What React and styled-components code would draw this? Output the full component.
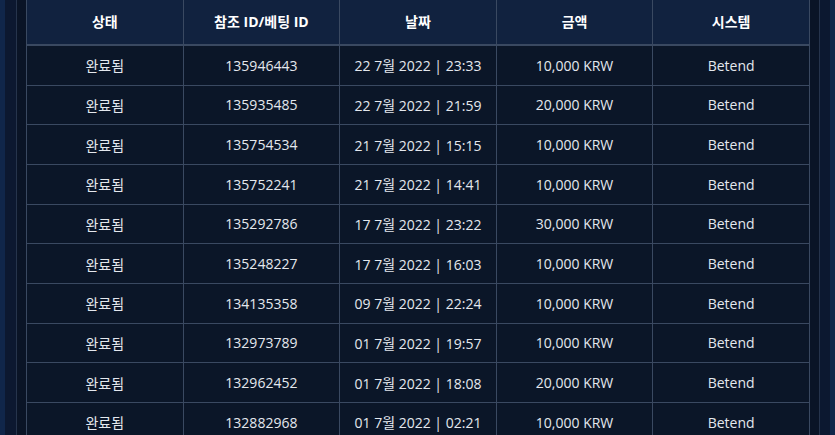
import React from 'react';
import styled, { createGlobalStyle } from 'styled-components';

const GlobalStyle = createGlobalStyle`
  html, body {
    margin: 0;
    padding: 0;
    height: 100%;
    overflow: hidden;
    background: #10264a;
  }
  body {
    font-family: "Open Sans", "Noto Sans", "Noto Sans CJK KR", sans-serif;
  }
`;

const rows = [
  ['135946443', '22 7월 2022 | 23:33', '10,000 KRW'],
  ['135935485', '22 7월 2022 | 21:59', '20,000 KRW'],
  ['135754534', '21 7월 2022 | 15:15', '10,000 KRW'],
  ['135752241', '21 7월 2022 | 14:41', '10,000 KRW'],
  ['135292786', '17 7월 2022 | 23:22', '30,000 KRW'],
  ['135248227', '17 7월 2022 | 16:03', '10,000 KRW'],
  ['134135358', '09 7월 2022 | 22:24', '10,000 KRW'],
  ['132973789', '01 7월 2022 | 19:57', '10,000 KRW'],
  ['132962452', '01 7월 2022 | 18:08', '20,000 KRW'],
  ['132882968', '01 7월 2022 | 02:21', '10,000 KRW'],
];

const Page = styled.div`
  padding: 0 5px;
  height: 100vh;
  box-sizing: border-box;
`;

const Outer = styled.div`
  background: #0c1830;
  padding: 0 10px 0 11px;
  height: 100%;
`;

const Inner = styled.div`
  background: #0a1426;
  border-left: 1px solid #26344c;
  border-right: 1px solid #26344c;
  padding: 0 9px;
  height: 100%;
`;

const Table = styled.table`
  width: 784px;
  border-collapse: collapse;
  table-layout: fixed;
  border: 1px solid #3a4961;
  border-top: none;
`;

const Th = styled.th`
  height: 41px;
  padding: 0 0 3px;
  background: #11223f;
  color: #ffffff;
  font-family: "Open Sans", "Noto Sans CJK KR", sans-serif;
  font-size: 14px;
  font-weight: 700;
  text-align: center;
  border: 1px solid #3a4961;
  border-top: none;
  border-bottom: 2px solid #3a4961;
`;

const Td = styled.td`
  height: 38.67px;
  padding: 0;
  background: #0b1628;
  color: #e4e8ee;
  font-family: "Open Sans", "Noto Sans CJK KR", sans-serif;
  font-size: 14px;
  text-align: center;
  border: 1px solid #3a4961;
`;

function App() {
  return (
    <>
      <GlobalStyle />
      <Page>
        <Outer>
          <Inner>
            <Table>
              <thead>
                <tr>
                  <Th>상태</Th>
                  <Th>참조 ID/베팅 ID</Th>
                  <Th>날짜</Th>
                  <Th>금액</Th>
                  <Th>시스템</Th>
                </tr>
              </thead>
              <tbody>
                {rows.map(([id, date, amount]) => (
                  <tr key={id}>
                    <Td>완료됨</Td>
                    <Td>{id}</Td>
                    <Td>{date}</Td>
                    <Td>{amount}</Td>
                    <Td>Betend</Td>
                  </tr>
                ))}
              </tbody>
            </Table>
          </Inner>
        </Outer>
      </Page>
    </>
  );
}

export default App;
